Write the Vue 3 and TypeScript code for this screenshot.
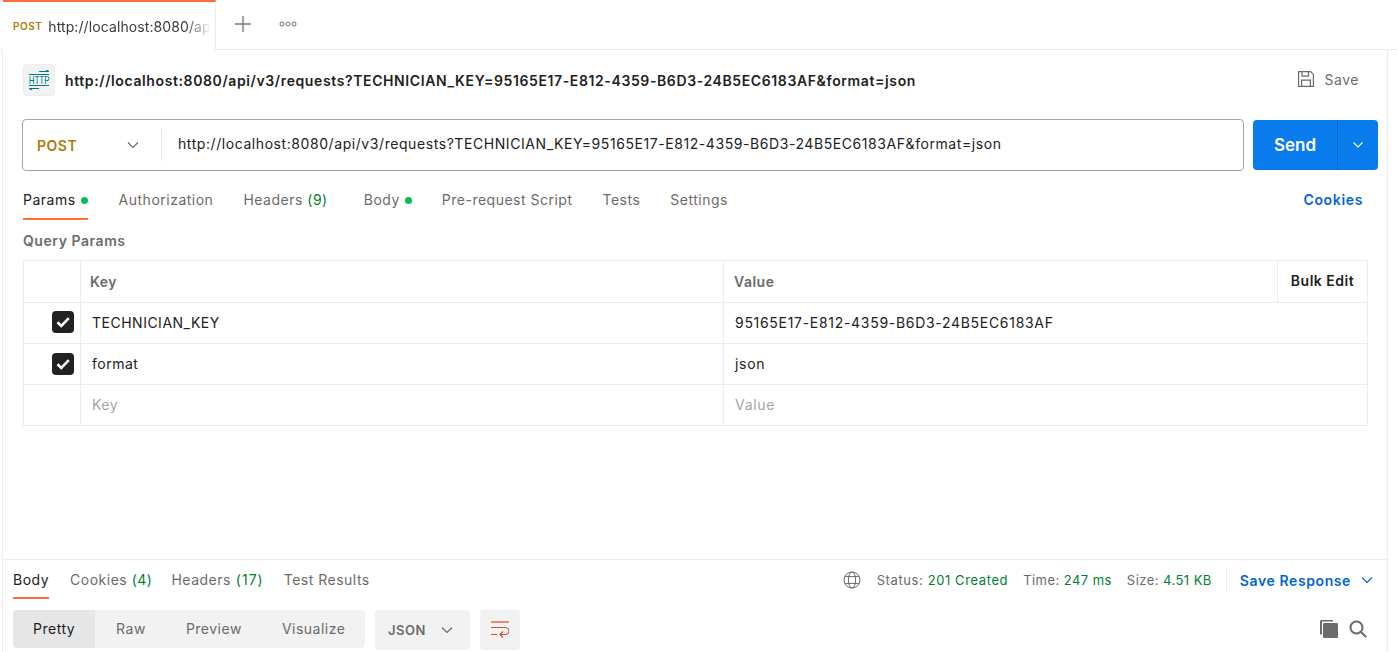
<template>
  <div class="app">
    <header class="tabbar">
      <div class="tab">
        <span class="tab-method">POST</span>
        <span class="tab-url">http://localhost:8080/ap</span>
      </div>
      <button class="icon-btn plus">
        <svg width="16" height="16" viewBox="0 0 16 16"><path d="M8 0v16M0 8h16" stroke="#7a7a7a" stroke-width="1.4" fill="none" /></svg>
      </button>
      <button class="icon-btn more">
        <svg width="18" height="6" viewBox="0 0 18 6" fill="none" stroke="#6b6b6b" stroke-width="1"><circle cx="3" cy="3" r="2" /><circle cx="9" cy="3" r="2" /><circle cx="15" cy="3" r="2" /></svg>
      </button>
    </header>

    <main class="workspace">
      <section class="request">
        <div class="name-row">
          <div class="http-icon">
            <svg width="20" height="5" viewBox="0 0 20 5" fill="none" stroke="#007b8a" stroke-width="1.2"><path d="M0 4.500h20M10 1.500h9.500L17 0" /></svg>
            <span class="http-text">HTTP</span>
            <svg width="20" height="5" viewBox="0 0 20 5" fill="none" stroke="#007b8a" stroke-width="1.2"><path d="M0 .5h20M10 3.500H.5L3 5" /></svg>
          </div>
          <span class="name">{{ url }}</span>
          <div class="save">
            <svg width="18" height="18" viewBox="0 0 18 18" fill="none" stroke="#6b6b6b" stroke-width="1.2"><path d="M1.600 1.600h12l2.800 2.800v12H1.600z" /><path d="M5 1.600v4.600h6.500V1.600M4.600 16.400v-6.200h8.800v6.200" /></svg>
            <span>Save</span>
          </div>
        </div>

        <div class="url-row">
          <div class="url-box">
            <div class="method">
              <span>POST</span>
              <svg class="chev" width="12" height="8" viewBox="0 0 12 8"><path d="M1 1.500l5 5 5-5" stroke="#6b6b6b" stroke-width="1.2" fill="none" /></svg>
            </div>
            <div class="url-text">{{ url }}</div>
          </div>
          <div class="send">
            <span class="send-label">Send</span>
            <span class="send-more">
              <svg width="12" height="8" viewBox="0 0 12 8"><path d="M1.500 1.500l4.500 4.500 4.500-4.500" stroke="#fff" stroke-width="1.2" fill="none" /></svg>
            </span>
          </div>
        </div>

        <nav class="req-tabs">
          <div v-for="t in requestTabs" :key="t.label" class="req-tab" :class="{ active: t.active }">
            {{ t.label }}<span v-if="t.count" class="count">&nbsp;({{ t.count }})</span><span v-if="t.dot" class="dot"></span>
          </div>
          <a class="cookies">Cookies</a>
        </nav>

        <div class="section-title">Query Params</div>

        <div class="params">
          <div class="row head">
            <div class="cell check"></div>
            <div class="cell key">Key</div>
            <div class="cell value">Value</div>
            <div class="bulk">Bulk Edit</div>
          </div>
          <div v-for="p in params" :key="p.key" class="row">
            <div class="cell check">
              <span class="checkbox">
                <svg width="14" height="12" viewBox="0 0 14 12"><path d="M1.500 6.300l3.800 3.700L12.800 2.200" stroke="#fff" stroke-width="2.600" fill="none" /></svg>
              </span>
            </div>
            <div class="cell key">{{ p.key }}</div>
            <div class="cell value">{{ p.value }}</div>
          </div>
          <div class="row empty">
            <div class="cell check"></div>
            <div class="cell key">Key</div>
            <div class="cell value">Value</div>
          </div>
        </div>
      </section>

      <section class="response">
        <div class="res-head">
          <nav class="res-tabs">
            <div v-for="t in responseTabs" :key="t.label" class="res-tab" :class="{ active: t.active }">
              {{ t.label }}<span v-if="t.count" class="count">&nbsp;({{ t.count }})</span>
            </div>
          </nav>
          <div class="meta">
            <svg class="globe" width="18" height="18" viewBox="0 0 18 18" fill="none" stroke="#6b6b6b" stroke-width="1"><circle cx="9" cy="9" r="8" /><ellipse cx="9" cy="9" rx="3.600" ry="8" /><path d="M1.800 5.600h14.400M1.800 12.400h14.400" /></svg>
            <span class="stat">Status: <b>201 Created</b></span>
            <span class="stat">Time: <b>247 ms</b></span>
            <span class="stat">Size: <b>4.51 KB</b></span>
            <span class="divider"></span>
            <a class="save-res">Save Response</a>
            <svg width="12" height="8" viewBox="0 0 12 8"><path d="M1 1.500l5 5 5-5" stroke="#0265d2" stroke-width="1.2" fill="none" /></svg>
          </div>
        </div>

        <div class="toolbar">
          <div class="segment">
            <span v-for="m in viewModes" :key="m" class="seg-item" :class="{ active: m === 'Pretty' }">{{ m }}</span>
          </div>
          <div class="format">
            <span>JSON</span>
            <svg width="12" height="8" viewBox="0 0 12 8"><path d="M1 1.500l5 5 5-5" stroke="#6b6b6b" stroke-width="1.2" fill="none" /></svg>
          </div>
          <div class="wrap">
            <svg width="18" height="18" viewBox="0 0 18 18" fill="none" stroke="#dc4b26" stroke-width="1.200"><path d="M0 1h18" /><path d="M0 6.500h14.500a3.500 3.500 0 0 1 0 7H9" stroke-width="1" /><path d="M0 13.500h6M12 10.500l-3 3 3 3" /></svg>
          </div>
          <div class="tools">
            <svg width="19" height="18" viewBox="0 0 19 18" fill="#6b6b6b"><path d="M3 0h11v1.600H3v13H1V1.500A1.500 1.500 0 0 1 3 0z" /><rect x="4" y="3" width="15" height="15" rx="1" /></svg>
            <svg width="18" height="18" viewBox="0 0 18 18" fill="none" stroke="#6b6b6b" stroke-width="2"><circle cx="7.500" cy="7.500" r="6" /><path d="M12 12l5 5" /></svg>
          </div>
        </div>
      </section>
    </main>
  </div>
</template>

<script setup lang="ts">
const url =
  'http://localhost:8080/api/v3/requests?TECHNICIAN_KEY=95165E17-E812-4359-B6D3-24B5EC6183AF&format=json'

const requestTabs = [
  { label: 'Params', dot: true, active: true },
  { label: 'Authorization' },
  { label: 'Headers', count: 9 },
  { label: 'Body', dot: true },
  { label: 'Pre-request Script' },
  { label: 'Tests' },
  { label: 'Settings' },
]

const params = [
  { key: 'TECHNICIAN_KEY', value: '95165E17-E812-4359-B6D3-24B5EC6183AF' },
  { key: 'format', value: 'json' },
]

const responseTabs = [
  { label: 'Body', active: true },
  { label: 'Cookies', count: 4 },
  { label: 'Headers', count: 17 },
  { label: 'Test Results' },
]

const viewModes = ['Pretty', 'Raw', 'Preview', 'Visualize']
</script>

<style>
html,
body {
  margin: 0;
  background: #fff;
  overflow: hidden;
}
</style>

<style scoped>
.app {
  width: 1397px;
  height: 652px;
  display: flex;
  flex-direction: column;
  font-family: Inter, "Liberation Sans", sans-serif;
  font-size: 14px;
  letter-spacing: 0.5px;
  color: #212121;
  overflow: hidden;
}

.tabbar {
  height: 49px;
  flex: none;
  display: flex;
  align-items: center;
  border-bottom: 1px solid #ededed;
  padding-left: 3px;
}

.tab {
  width: 213px;
  height: 50px;
  margin-bottom: -1px;
  box-sizing: border-box;
  border-top: 2px solid #ff6c37;
  border-right: 1px solid #ededed;
  background: #fff;
  display: flex;
  align-items: center;
  padding: 0 11px 0 10px;
  gap: 6px;
  overflow: hidden;
}

.tab-method {
  font-size: 10px;
  font-weight: 600;
  color: #ad7a03;
  flex: none;
}

.tab-url {
  white-space: nowrap;
  letter-spacing: 0.1px;
  -webkit-mask-image: linear-gradient(to right, #000 85%, transparent);
  mask-image: linear-gradient(to right, #000 85%, transparent);
  color: #3b3b3b;
}

.icon-btn {
  border: 0;
  background: none;
  padding: 0;
  display: flex;
}

.plus {
  margin-left: 19px;
  margin-top: -2px;
}

.more {
  margin-left: 28px;
  margin-top: -2px;
}

.workspace {
  flex: 1;
  margin-left: 2px;
  width: 1386px;
  box-sizing: border-box;
  border-left: 1px solid #ededed;
  border-right: 1px solid #ededed;
  display: flex;
  flex-direction: column;
  min-height: 0;
}

.request {
  flex: 1;
  padding: 0 8px 0 20px;
}

.name-row {
  display: flex;
  align-items: center;
  height: 32px;
  margin-top: 14px;
}

.http-icon {
  width: 32px;
  height: 32px;
  box-sizing: border-box;
  background: #f2f2f2;
  border: 1px solid #ededed;
  border-radius: 4px;
  display: flex;
  flex-direction: column;
  align-items: center;
  justify-content: center;
  color: #007b8a;
}

.http-text {
  font-family: "Liberation Sans", sans-serif;
  font-size: 11px;
  letter-spacing: 0;
  line-height: 10px;
  transform: scaleX(0.72);
}

.name {
  margin-left: 10px;
  font-weight: 600;
  letter-spacing: 0.61px;
  white-space: nowrap;
}

.save {
  margin-left: auto;
  margin-right: 20px;
  margin-top: -2px;
  display: flex;
  align-items: center;
  gap: 10px;
  color: #6b6b6b;
}

.url-row {
  display: flex;
  margin-top: 23px;
  gap: 9px;
  margin-left: -1px;
}

.url-box {
  flex: none;
  width: 1222px;
  height: 52px;
  box-sizing: border-box;
  border: 1px solid #a6a6a6;
  border-radius: 4px;
  display: flex;
  align-items: center;
}

.method {
  width: 139px;
  height: 32px;
  box-sizing: border-box;
  border-right: 1px solid #e6e6e6;
  display: flex;
  align-items: center;
  justify-content: space-between;
  padding: 0 22px 0 14px;
  color: #ad7a03;
  font-weight: 600;
}

.url-text {
  margin-left: 16px;
  padding-bottom: 3px;
  letter-spacing: 0.57px;
  white-space: nowrap;
}

.send {
  flex: none;
  width: 125px;
  height: 50px;
  margin-top: 1px;
  background: #097bed;
  border-radius: 4px;
  color: #fff;
  display: flex;
  align-items: center;
  font-size: 17px;
  letter-spacing: 0;
  font-weight: 600;
}

.send-label {
  width: 84px;
  height: 100%;
  display: flex;
  align-items: center;
  justify-content: center;
  border-right: 1px solid #0265d2;
}

.send-more {
  flex: 1;
  display: flex;
  justify-content: center;
}

.req-tabs {
  display: flex;
  align-items: flex-start;
  gap: 30px;
  height: 38px;
  margin-top: 19px;
  color: #6b6b6b;
}

.req-tab {
  height: 30px;
  line-height: 20px;
  white-space: nowrap;
  box-sizing: border-box;
  padding-bottom: 8px;
  border-bottom: 2px solid transparent;
  display: flex;
  align-items: flex-start;
}

.req-tab .count {
  margin-right: 6px;
}

.req-tab.active {
  color: #212121;
  border-bottom-color: #ff6c37;
  margin-right: 1px;
}

.count {
  color: #007f31;
}

.dot {
  width: 7px;
  height: 7px;
  border-radius: 50%;
  background: #0cbb52;
  margin: 7px 0 0 5px;
}

.cookies {
  margin-left: auto;
  margin-right: 16px;
  line-height: 20px;
  letter-spacing: 0.65px;
  color: #0265d2;
  font-weight: 600;
}

.section-title {
  margin-top: 3px;
  line-height: 20px;
  font-weight: 600;
  font-size: 14px;
  letter-spacing: 0.55px;
  color: #6b6b6b;
}

.params {
  margin-top: 9px;
  width: 1345px;
  box-sizing: border-box;
  border: 1px solid #ededed;
  border-bottom: 0;
}

.row {
  display: flex;
  height: 41px;
  box-sizing: border-box;
  border-bottom: 1px solid #ededed;
  position: relative;
}

.row.head {
  height: 42px;
  font-weight: 600;
  color: #6b6b6b;
}

.cell {
  display: flex;
  align-items: center;
  box-sizing: border-box;
  white-space: nowrap;
}

.cell.check {
  width: 57px;
  border-right: 1px solid #ededed;
  justify-content: flex-end;
  padding-right: 6px;
}

.cell.key {
  width: 643px;
  border-right: 1px solid #ededed;
  padding-left: 11px;
  padding-bottom: 2px;
}

.cell.value {
  flex: 1;
  padding-left: 11px;
  padding-bottom: 2px;
  letter-spacing: 0.7px;
}

.head .cell.key,
.head .cell.value {
  padding-bottom: 0;
  letter-spacing: 0.5px;
}

.head .cell.key {
  padding-left: 9px;
}

.head .cell.value {
  padding-left: 10px;
}

.empty .cell {
  color: #a6a6a6;
}

.checkbox {
  width: 22px;
  height: 22px;
  background: #212121;
  border-radius: 4px;
  display: flex;
  align-items: center;
  justify-content: center;
}

.row:nth-child(2) .checkbox {
  margin-top: -2px;
}

.bulk {
  width: 90px;
  box-sizing: border-box;
  border-left: 1px solid #ededed;
  display: flex;
  align-items: center;
  justify-content: center;
  color: #212121;
  height: 41px;
  padding-bottom: 2px;
}

.response {
  flex: none;
  height: 93px;
  box-sizing: border-box;
  border-top: 1px solid #ededed;
  padding: 0 10px;
}

.res-head {
  height: 50px;
  display: flex;
  justify-content: space-between;
}

.res-tabs {
  display: flex;
  gap: 21px;
  color: #6b6b6b;
  padding-top: 10px;
}

.res-tab {
  height: 29px;
  box-sizing: border-box;
  line-height: 20px;
  border-bottom: 2px solid transparent;
  white-space: nowrap;
}

.res-tab:nth-child(3) {
  margin-left: -2px;
}

.res-tab:nth-child(3) .count {
  letter-spacing: 1px;
}

.res-tab:nth-child(4) {
  margin-left: -1px;
}

.res-tab.active {
  color: #212121;
  border-bottom-color: #ff6c37;
}

.meta {
  display: flex;
  align-items: center;
  height: 40px;
  font-size: 13px;
  letter-spacing: 0.6px;
  color: #6b6b6b;
  padding-right: 4px;
}

.globe {
  margin-right: 16px;
}

.stat {
  margin-right: 15px;
}

.stat:nth-of-type(3) {
  margin-right: 14px;
}

.stat + .stat {
  letter-spacing: 0.45px;
}

.stat b {
  font-weight: 400;
  color: #007f31;
}

.divider {
  width: 1px;
  height: 24px;
  background: #ededed;
  margin: 0 13px 0 0;
}

.save-res {
  font-size: 14px;
  letter-spacing: 0.6px;
  font-weight: 600;
  color: #0265d2;
  margin-right: 10px;
}

.toolbar {
  display: flex;
  align-items: flex-start;
}

.segment {
  height: 38px;
  width: 352px;
  background: #f2f2f2;
  border-radius: 4px;
  display: flex;
  color: #6b6b6b;
  overflow: hidden;
}

.seg-item {
  display: flex;
  align-items: center;
  padding: 0 20px 2px;
}

.seg-item.active {
  background: #e6e6e6;
  color: #212121;
}

.seg-item.active + .seg-item {
  padding-left: 21px;
}

.format {
  margin-left: 10px;
  width: 95px;
  height: 40px;
  box-sizing: border-box;
  background: #f2f2f2;
  border-radius: 4px;
  display: flex;
  align-items: center;
  justify-content: space-between;
  padding: 0 17px 0 13px;
  font-size: 13px;
  font-weight: 600;
  color: #6b6b6b;
}

.wrap {
  margin-left: 10px;
  width: 40px;
  height: 40px;
  background: #f2f2f2;
  border-radius: 4px;
  display: flex;
  align-items: center;
  justify-content: center;
}

.tools {
  margin-left: auto;
  margin-right: 10px;
  margin-top: 10px;
  display: flex;
  gap: 11px;
}
</style>
